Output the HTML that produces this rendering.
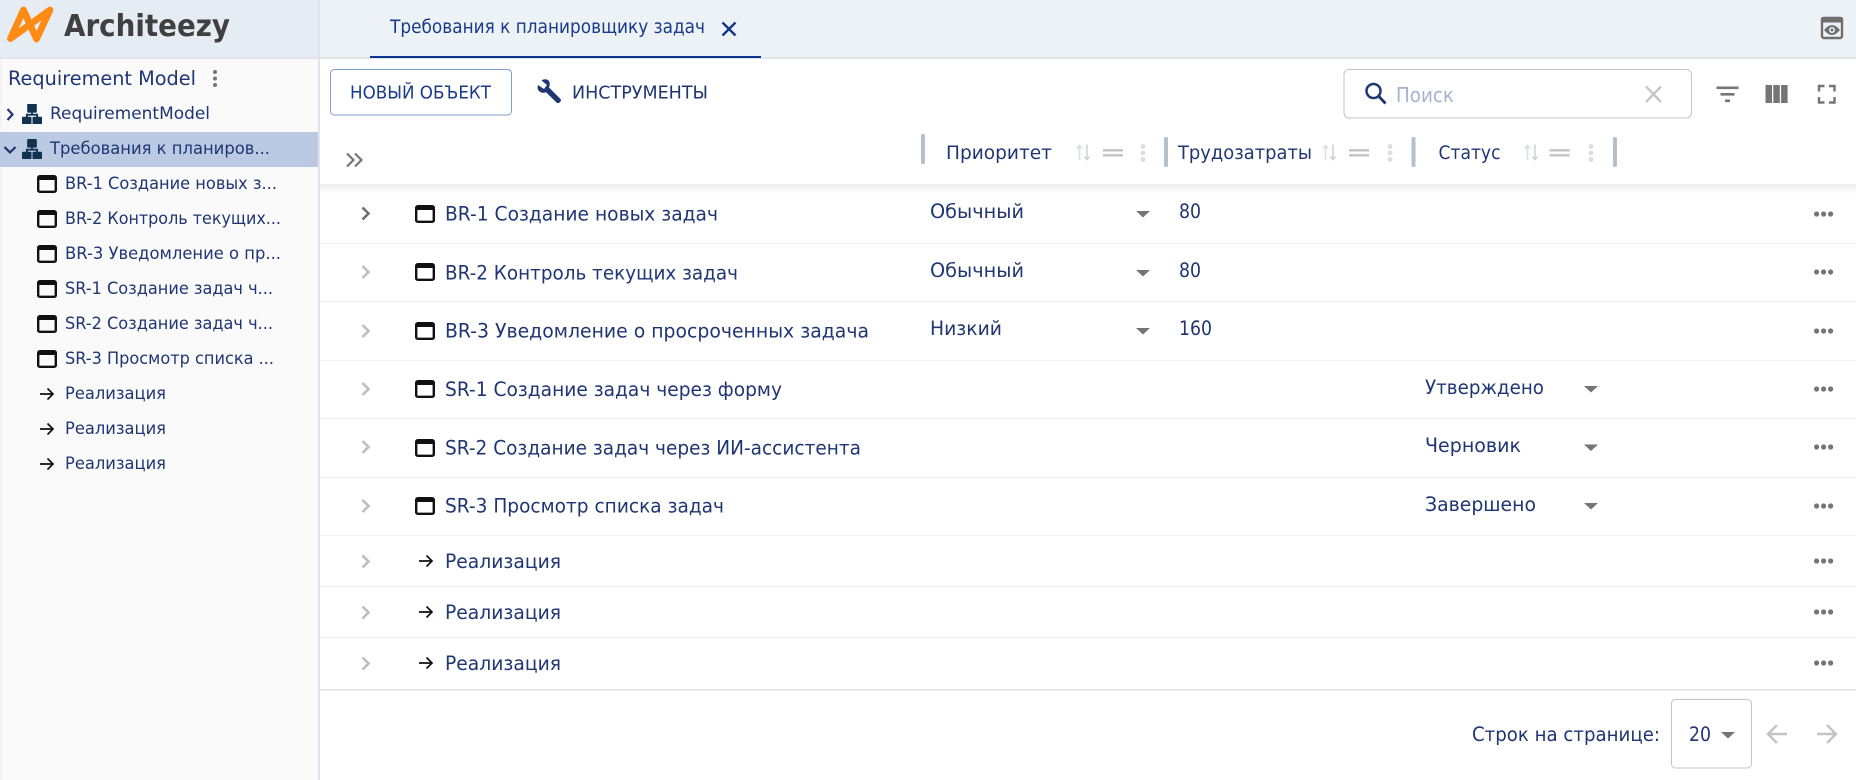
<!DOCTYPE html>
<html lang="ru"><head><meta charset="utf-8"><title>Architeezy</title>
<style>
html,body{margin:0;padding:0;background:#fff;width:1856px;height:780px;overflow:hidden}
svg{display:block}
text{font-family:"DejaVu Sans","Liberation Sans","Noto Sans CJK SC",sans-serif;fill:#1f3673;font-size:19.6px}
.s{font-size:17px}
.h{font-size:19px}
</style></head><body>
<svg width="1856" height="780" viewBox="0 0 1856 780" xmlns="http://www.w3.org/2000/svg">
<defs>
<linearGradient id="sh" x1="0" y1="0" x2="0" y2="1"><stop offset="0" stop-color="#000" stop-opacity=".07"/><stop offset="1" stop-color="#000" stop-opacity="0"/></linearGradient>
<g id="win"><rect x="1.2" y="1.2" width="17.6" height="15.6" rx="1.6" fill="none" stroke="#111" stroke-width="2.4"/><rect x="1" y="1" width="18" height="4" fill="#111"/></g>
<path id="arr" d="M0 7H12.5M7.5 1.5L13 7L7.5 12.5" fill="none" stroke="#111" stroke-width="1.7"/>
<g id="tree" fill="#0f3350"><rect x="5.2" y="0" width="9.6" height="8.6" rx=".8"/><rect x="0" y="12.800" width="9.500" height="7.200" rx=".8"/><rect x="10.500" y="12.800" width="9.500" height="7.200" rx=".8"/><rect x="4" y="9.800" width="12" height="1.800"/><rect x="4" y="9.800" width="1.800" height="3.500"/><rect x="14.200" y="9.800" width="1.800" height="3.500"/><rect x="9.100" y="8" width="1.800" height="3"/></g>
<g id="sort" fill="none" stroke="#dcdfe2" stroke-width="1.6"><path d="M3.5 16V1.5M.8 4.5L3.5 1.5L6.2 4.5"/><path d="M11 .5V15.5M8.3 12.5L11 15.5L13.7 12.5" stroke="#d0d3d6"/></g>
<g id="eq" fill="#c6c6c6"><rect width="20" height="2.6"/><rect y="5" width="20" height="2.6"/></g>
<g id="vd" fill="#dedede"><circle cx="0" cy="2.5" r="2.4"/><circle cx="0" cy="9" r="2.4"/><circle cx="0" cy="15.5" r="2.4"/></g>
<g id="hd" fill="#757575"><circle cx="2.6" cy="0" r="2.6"/><circle cx="9.6" cy="0" r="2.6"/><circle cx="16.6" cy="0" r="2.6"/></g>
<path id="tri" d="M0 0H14L7 6.5z" fill="#757575"/>
<path id="chev" d="M2 1.5L8 7.5L2 13.5" fill="none" stroke="#bdbdbd" stroke-width="2.6"/>
</defs>

<!-- top bars -->
<rect x="0" y="0" width="318" height="58" fill="#e6ecf3"/>
<rect x="320" y="0" width="1536" height="57" fill="#edf2f6"/>
<rect x="0" y="57" width="1856" height="2" fill="#e0e4e8"/>
<!-- sidebar -->
<rect x="0" y="59" width="318" height="721" fill="#fafafa"/>
<rect x="0" y="59" width="1.500" height="721" fill="#f3f3f3"/>
<rect x="318" y="0" width="2" height="780" fill="#dfe4ea"/>

<!-- logo -->
<path d="M10.500 38.500L23.500 10L36.500 39L50 10L10.500 38.500" fill="none" stroke="#ff8a14" stroke-width="6.800" stroke-linejoin="round" stroke-linecap="round"/>
<text x="64" y="36" textLength="166" lengthAdjust="spacingAndGlyphs" style="font-size:30px;font-weight:700;fill:#404040">Architeezy</text>

<!-- tab -->
<text x="390" y="33" textLength="315" lengthAdjust="spacingAndGlyphs" style="font-size:18.500px;fill:#1a3a8a">Требования к планировщику задач</text>
<path d="M722.500 22.500L735.500 35.500M735.500 22.500L722.500 35.500" stroke="#123588" stroke-width="2.300" fill="none"/>
<rect x="370" y="56" width="391" height="2" fill="#0a3690"/>
<!-- eye -->
<rect x="1822" y="18" width="20" height="20" rx="2" fill="none" stroke="#6f6f6f" stroke-width="2.400"/>
<rect x="1821" y="17" width="22" height="5.500" rx="2" fill="#6f6f6f"/>
<path d="M1824 30Q1832 20 1840 30Q1832 40 1824 30z" fill="#6f6f6f"/><circle cx="1832" cy="30" r="3" fill="#edf2f6"/><circle cx="1832" cy="30" r="1.500" fill="#6f6f6f"/>

<!-- sidebar content -->
<text x="8" y="85" textLength="188" lengthAdjust="spacingAndGlyphs">Requirement Model</text>
<g fill="#757575"><circle cx="215" cy="72" r="2"/><circle cx="215" cy="78.500" r="2"/><circle cx="215" cy="85" r="2"/></g>
<path d="M7.500 109L12.500 114.500L7.500 120" fill="none" stroke="#1f3673" stroke-width="2.200"/>
<use href="#tree" x="22" y="104"/>
<text class="s" x="50" y="119" textLength="160" lengthAdjust="spacingAndGlyphs">RequirementModel</text>
<rect x="0" y="132" width="318" height="35" fill="#bcc9e2"/>
<path d="M4.500 147L10 152.500L15.500 147" fill="none" stroke="#1f3673" stroke-width="2.200"/>
<use href="#tree" x="22" y="139"/>
<text class="s" x="50" y="154" textLength="220" lengthAdjust="spacingAndGlyphs">Требования к планиров...</text>
<use href="#win" x="37" y="175"/><text class="s" x="65" y="189" textLength="212" lengthAdjust="spacingAndGlyphs">BR-1 Создание новых з...</text>
<use href="#win" x="37" y="210"/><text class="s" x="65" y="224" textLength="216" lengthAdjust="spacingAndGlyphs">BR-2 Контроль текущих...</text>
<use href="#win" x="37" y="245"/><text class="s" x="65" y="259" textLength="216" lengthAdjust="spacingAndGlyphs">BR-3 Уведомление о пр...</text>
<use href="#win" x="37" y="280"/><text class="s" x="65" y="294" textLength="208" lengthAdjust="spacingAndGlyphs">SR-1 Создание задач ч...</text>
<use href="#win" x="37" y="315"/><text class="s" x="65" y="329" textLength="208" lengthAdjust="spacingAndGlyphs">SR-2 Создание задач ч...</text>
<use href="#win" x="37" y="350"/><text class="s" x="65" y="364" textLength="209" lengthAdjust="spacingAndGlyphs">SR-3 Просмотр списка ...</text>
<use href="#arr" x="40" y="387"/><text class="s" x="65" y="399" textLength="101" lengthAdjust="spacingAndGlyphs">Реализация</text>
<use href="#arr" x="40" y="422"/><text class="s" x="65" y="434" textLength="101" lengthAdjust="spacingAndGlyphs">Реализация</text>
<use href="#arr" x="40" y="457"/><text class="s" x="65" y="469" textLength="101" lengthAdjust="spacingAndGlyphs">Реализация</text>

<!-- toolbar -->
<rect x="330.500" y="69.500" width="181" height="45.500" rx="4" fill="#fff" stroke="#7f9bcf" stroke-width="1"/>
<text x="350" y="98.500" textLength="141" lengthAdjust="spacingAndGlyphs" style="font-size:18px;fill:#1a3a8a">НОВЫЙ ОБЪЕКТ</text>
<path d="M560 98.500L549 87.500C550.500 84 549.700 81 547.500 79.800C545.500 78.900 543.200 79.200 541.500 80.500L547 85L544 89L538 85C537.200 87 537.500 89.500 539 91C541 93 544 93.300 546 92.300L556.500 102.500C557.500 103.300 558.700 103.300 559.500 102.500L560.500 101.500C561.300 100.500 561 99.300 560 98.500z" fill="#1f3673"/>
<text x="572" y="98.500" textLength="136" lengthAdjust="spacingAndGlyphs" style="font-size:18px">ИНСТРУМЕНТЫ</text>

<!-- search -->
<rect x="1344" y="69.500" width="347.500" height="48.500" rx="5" fill="#fff" stroke="#c4c4c4" stroke-width="1"/>
<circle cx="1373.500" cy="91" r="7" fill="none" stroke="#1f3673" stroke-width="2.500"/>
<path d="M1378.500 96L1385.500 103.500" stroke="#1f3673" stroke-width="2.800"/>
<text x="1396" y="102" textLength="58" lengthAdjust="spacingAndGlyphs" style="font-size:20px;fill:#a5b2d0">Поиск</text>
<path d="M1646 86.500L1661 102M1661 86.500L1646 102" stroke="#c4c4c4" stroke-width="2.300"/>
<!-- toolbar right -->
<g fill="#757575">
<rect x="1716.500" y="86.500" width="22" height="2.600"/><rect x="1720.500" y="93" width="14" height="2.600"/><rect x="1725" y="99.500" width="5" height="2.600"/>
<rect x="1765.500" y="85" width="6.500" height="18"/><rect x="1773.300" y="85" width="6.500" height="18"/><rect x="1781.100" y="85" width="6.500" height="18"/>
</g>
<path d="M1819 91.500V86H1824.500M1829 86H1834.500V91.500M1834.500 97V102.500H1829M1824.500 102.500H1819V97" fill="none" stroke="#757575" stroke-width="2.400"/>

<!-- table header -->
<rect x="320" y="184" width="1536" height="10" fill="url(#sh)"/>
<path d="M347 153.500L353.500 160L347 166.500M355 153.500L361.500 160L355 166.500" fill="none" stroke="#757575" stroke-width="2.200"/>
<g fill="#b5c0ca">
<rect x="921" y="134" width="4" height="30" rx="1.500"/><rect x="1164" y="137" width="4" height="30" rx="1.500"/><rect x="1411.500" y="137" width="4" height="30" rx="1.500"/><rect x="1613" y="137" width="4" height="30" rx="1.500"/>
</g>
<text class="h" x="946" y="159" textLength="106" lengthAdjust="spacingAndGlyphs">Приоритет</text>
<use href="#sort" x="1076" y="144"/><use href="#eq" x="1103" y="149"/><use href="#vd" x="1143" y="144"/>
<text class="h" x="1178" y="159" textLength="134" lengthAdjust="spacingAndGlyphs">Трудозатраты</text>
<use href="#sort" x="1322" y="144"/><use href="#eq" x="1349" y="149"/><use href="#vd" x="1390" y="144"/>
<text class="h" x="1438.500" y="159" textLength="62" lengthAdjust="spacingAndGlyphs">Статус</text>
<use href="#sort" x="1524" y="144"/><use href="#eq" x="1549.500" y="149"/><use href="#vd" x="1591" y="144"/>

<!-- row lines -->
<g fill="#f1f1f1">
<rect x="320" y="243" width="1536" height="1"/><rect x="320" y="301" width="1536" height="1"/><rect x="320" y="360" width="1536" height="1"/><rect x="320" y="418" width="1536" height="1"/><rect x="320" y="477" width="1536" height="1"/><rect x="320" y="535" width="1536" height="1"/><rect x="320" y="586" width="1536" height="1"/><rect x="320" y="637" width="1536" height="1"/>
</g>
<rect x="320" y="689" width="1536" height="1.500" fill="#e0e0e0"/>

<!-- chevrons -->
<path d="M362.500 207.500L368.500 213.500L362.500 219.500" fill="none" stroke="#6e6e6e" stroke-width="2.600"/>
<use href="#chev" x="360.500" y="264.500"/><use href="#chev" x="360.500" y="323.500"/><use href="#chev" x="360.500" y="381.500"/><use href="#chev" x="360.500" y="439.500"/><use href="#chev" x="360.500" y="498.500"/><use href="#chev" x="360.500" y="554"/><use href="#chev" x="360.500" y="605"/><use href="#chev" x="360.500" y="656"/>

<!-- rows -->
<use href="#win" x="415" y="205"/><text x="445" y="220.500" textLength="273" lengthAdjust="spacingAndGlyphs">BR-1 Создание новых задач</text>
<use href="#win" x="415" y="263"/><text x="445" y="279.500" textLength="293" lengthAdjust="spacingAndGlyphs">BR-2 Контроль текущих задач</text>
<use href="#win" x="415" y="322"/><text x="445" y="337.500" textLength="424" lengthAdjust="spacingAndGlyphs">BR-3 Уведомление о просроченных задача</text>
<use href="#win" x="415" y="380"/><text x="445" y="396" textLength="337" lengthAdjust="spacingAndGlyphs">SR-1 Создание задач через форму</text>
<use href="#win" x="415" y="439"/><text x="445" y="454.500" textLength="416" lengthAdjust="spacingAndGlyphs">SR-2 Создание задач через ИИ-ассистента</text>
<use href="#win" x="415" y="497"/><text x="445" y="512.500" textLength="279" lengthAdjust="spacingAndGlyphs">SR-3 Просмотр списка задач</text>
<use href="#arr" x="419" y="554"/><text x="445" y="568" textLength="116" lengthAdjust="spacingAndGlyphs">Реализация</text>
<use href="#arr" x="419" y="605"/><text x="445" y="619" textLength="116" lengthAdjust="spacingAndGlyphs">Реализация</text>
<use href="#arr" x="419" y="656"/><text x="445" y="670" textLength="116" lengthAdjust="spacingAndGlyphs">Реализация</text>

<!-- priority -->
<text x="930" y="218" textLength="94" lengthAdjust="spacingAndGlyphs">Обычный</text><use href="#tri" x="1136" y="211"/>
<text x="930" y="277" textLength="94" lengthAdjust="spacingAndGlyphs">Обычный</text><use href="#tri" x="1136" y="270"/>
<text x="930" y="335" textLength="72" lengthAdjust="spacingAndGlyphs">Низкий</text><use href="#tri" x="1136" y="328"/>
<text x="1179" y="218" textLength="22" lengthAdjust="spacingAndGlyphs">80</text>
<text x="1179" y="277" textLength="22" lengthAdjust="spacingAndGlyphs">80</text>
<text x="1179" y="335" textLength="33" lengthAdjust="spacingAndGlyphs">160</text>
<!-- status -->
<text x="1425" y="394" textLength="119" lengthAdjust="spacingAndGlyphs">Утверждено</text><use href="#tri" x="1584" y="386"/>
<text x="1425" y="452" textLength="96" lengthAdjust="spacingAndGlyphs">Черновик</text><use href="#tri" x="1584" y="444.500"/>
<text x="1425" y="511" textLength="111" lengthAdjust="spacingAndGlyphs">Завершено</text><use href="#tri" x="1584" y="503"/>

<!-- row menus -->
<use href="#hd" x="1814" y="214"/><use href="#hd" x="1814" y="272"/><use href="#hd" x="1814" y="331"/><use href="#hd" x="1814" y="389"/><use href="#hd" x="1814" y="447"/><use href="#hd" x="1814" y="506"/><use href="#hd" x="1814" y="561"/><use href="#hd" x="1814" y="612"/><use href="#hd" x="1814" y="663"/>

<!-- pagination -->
<text x="1472" y="741" textLength="188" lengthAdjust="spacingAndGlyphs">Строк на странице:</text>
<rect x="1671.500" y="699.500" width="80" height="68.500" rx="4" fill="#fff" stroke="#c4c4c4" stroke-width="1"/>
<text x="1689" y="741" textLength="22" lengthAdjust="spacingAndGlyphs">20</text>
<use href="#tri" x="1721" y="732"/>
<path d="M1787 734H1769M1777 725L1768 734L1777 743" fill="none" stroke="#c4c4c4" stroke-width="2.400"/>
<path d="M1817 734H1835M1827 725L1836 734L1827 743" fill="none" stroke="#c4c4c4" stroke-width="2.400"/>
</svg>
</body></html>
